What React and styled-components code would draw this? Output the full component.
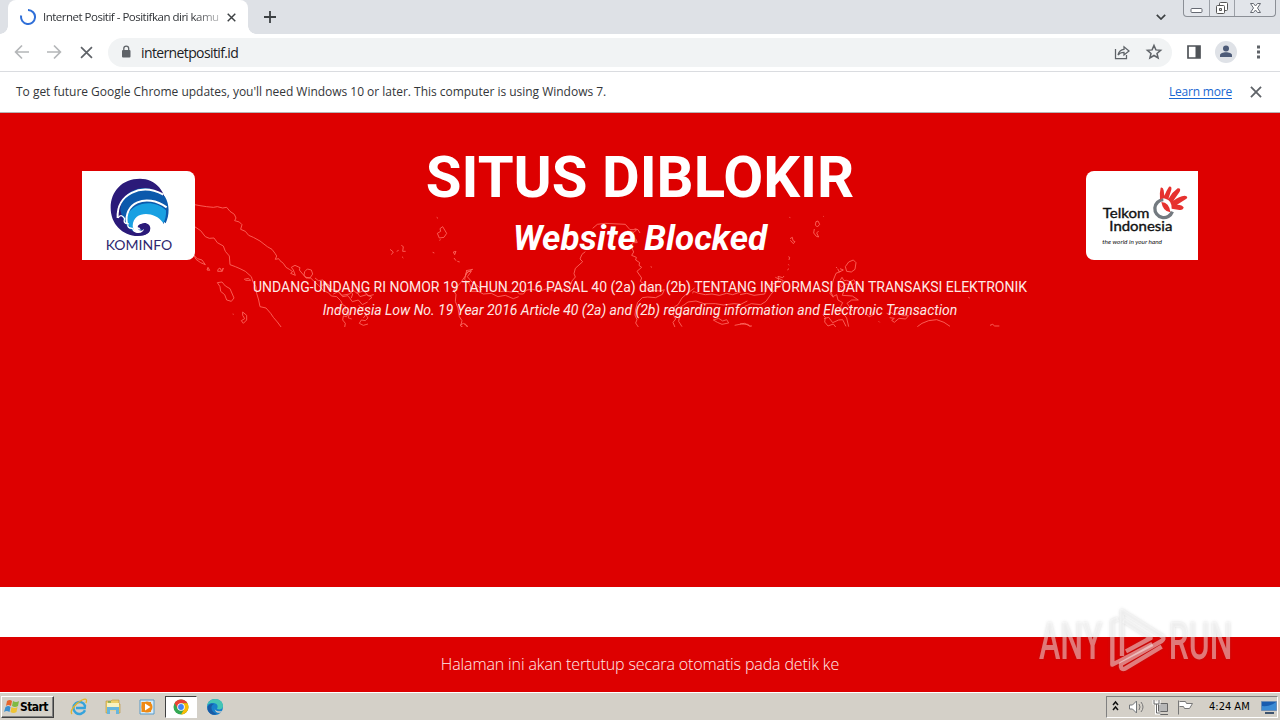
import React from 'react';
import styled, { createGlobalStyle } from 'styled-components';

const Global = createGlobalStyle`
  * { box-sizing: border-box; }
  body { margin: 0; background: #fff; font-family: "Open Sans", "Noto Sans", sans-serif; }
`;
const Page = styled.div`
  width: 1280px; height: 720px; overflow: hidden;
  display: flex; flex-direction: column; background: #fff;
`;
const TabStrip = styled.div`
  height: 34px; flex: none; background: #dee1e6; display: flex; align-items: flex-start;
`;
const Tab = styled.div`
  position: relative; height: 34px; width: 240px; margin-left: 8px; padding: 0 10px 0 12px;
  background: #fff; border-radius: 8px 8px 0 0; display: flex; align-items: center;
  &::before, &::after {
    content: ""; position: absolute; bottom: 0; width: 8px; height: 8px;
  }
  &::before { left: -8px; background: radial-gradient(circle at 0 0, transparent 7.5px, #fff 8px); }
  &::after { right: -8px; background: radial-gradient(circle at 100% 0, transparent 7.5px, #fff 8px); }
`;
const TabTitle = styled.div`
  width: 176px; margin: 0 8px 0 7px; white-space: nowrap;
  font-size: 11.5px; letter-spacing: -0.5px; color: #303337; line-height: 18px;
  mask-image: linear-gradient(to right, #000 150px, rgba(0, 0, 0, 0.3) 176px);
`;
const NewTab = styled.div`
  width: 44px; height: 34px; display: flex; align-items: center; justify-content: center;
`;
const StripRight = styled.div`
  margin-left: auto; display: flex; align-items: flex-start; padding-right: 4px;
`;
const Chevron = styled.div`
  width: 28px; height: 33px; margin-right: 8px; display: flex; align-items: center; justify-content: center;
`;
const WindowButtons = styled.div`
  width: 93px; height: 17px; display: flex; border: 1px solid #8b8f96; border-top: 0;
  border-radius: 0 0 4px 4px; background: #e2e5ea;
`;
const WindowButton = styled.div`
  width: ${p => p.$width}px; height: 16px; display: flex; align-items: center; justify-content: center;
  & + & { border-left: 1px solid #9ca0a7; }
`;
const Toolbar = styled.div`
  height: 38px; flex: none; display: flex; align-items: center; padding: 0 11px 1px 12px;
  background: #fff; border-bottom: 1px solid #dadce0;
`;
const NavButton = styled.div`
  width: 32px; flex: none; height: 28px; display: flex; align-items: center; justify-content: center;
  padding-right: 12px;
`;
const Omnibox = styled.div`
  width: 1064px; flex: none; height: 29px; border-radius: 15px; background: #f1f3f4;
  display: flex; align-items: center; padding: 0 9px 0 12px;
`;
const Url = styled.div`
  flex: 1; margin-left: 9px; font-size: 14px; color: #202124; letter-spacing: -0.62px; line-height: 20px; padding-top: 1px;
`;
const OmniIcons = styled.div`display: flex; align-items: center; gap: 14px;`;
const ToolIcons = styled.div`
  margin-left: 13px; display: flex; align-items: center; gap: 12px;
`;
const InfoBar = styled.div`
  height: 41px; flex: none; display: flex; align-items: center; padding: 0 18px 1px 16px; background: #fff;
  border-bottom: 1px solid #b9b4b4; font-size: 12px; color: #333639;
`;
const InfoText = styled.div`flex: 1; white-space: nowrap; letter-spacing: ${p => p.$spacing || 0}px;`;
const Learn = styled.a`
  color: #1967d2; text-decoration: underline; text-underline-offset: 2px; margin-right: 18px; letter-spacing: -0.2px;
`;
const Hero = styled.main`
  height: 474px; flex: none; background: #dd0000; position: relative; overflow: hidden;
`;
const MapLayer = styled.svg`position: absolute; left: 0; top: 0;`;
const HeroRow = styled.div`
  position: relative; display: flex; justify-content: space-between; align-items: flex-start; padding: 0 82px;
`;
const LogoCard = styled.div`
  width: 112.5px; height: 88.5px; margin-top: 58px; background: #fff; flex: none;
  border-radius: ${p => (p.$left ? '0 8px 8px 0' : '8px 0 0 8px')};
`;
const Headings = styled.div`
  flex: 1; min-width: 0; display: flex; flex-direction: column; align-items: center;
  font-family: Roboto, sans-serif; color: #fff; white-space: nowrap;
`;
const Title = styled.h1`margin: 29px 0 0; font-size: 58px; line-height: 70px; font-weight: 700; letter-spacing: ${p => p.$spacing}px;`;
const Subtitle = styled.h2`margin: 5px 0 0; font-size: 35px; line-height: 44px; font-weight: 700; font-style: italic; letter-spacing: ${p => p.$spacing}px;`;
const Law = styled.p`
  margin: ${p => p.$top}px 0 0; font-size: 14px; line-height: 20px; letter-spacing: ${p => p.$spacing}px;
  font-style: ${p => (p.$italic ? 'italic' : 'normal')}; color: #ffe9e6;
`;
const Gap = styled.div`height: 50px; flex: none; background: #fff;`;
const Countdown = styled.footer`
  height: 55px; flex: none; background: #dd0000; color: #ffecea; text-align: center;
  font-size: 16px; font-weight: 300; line-height: 55px; letter-spacing: ${p => p.$spacing}px;
`;
const Taskbar = styled.div`
  height: 28px; flex: none; background: #d4d0c8; border-top: 1px solid #fff;
  display: flex; align-items: center; padding: 0 2px 0 1px;
`;
const StartButton = styled.div`
  width: 53px; height: 22px; display: flex; align-items: center; padding-left: 2px;
  border: 1px solid; border-color: #fff #404040 #404040 #fff; box-shadow: inset -1px -1px #808080;
  font: bold 12px "DejaVu Sans Condensed", sans-serif; letter-spacing: -0.6px; color: #000;
`;
const TaskItems = styled.div`display: flex; margin-left: 9px; gap: 2px;`;
const TaskItem = styled.div`
  width: 32px; height: 22px; display: flex; align-items: center; justify-content: center;
  border: 1px solid; border-color: ${p => (p.$active ? '#404040 #fff #fff #404040' : 'transparent')};
  background: ${p => (p.$active ? '#fff' : 'transparent')};
`;
const Tray = styled.div`
  margin-left: auto; width: 172px; height: 22px; display: flex; align-items: center;
  border: 1px solid; border-color: #808080 #fff #fff #808080; padding-left: 4px;
`;
const Clock = styled.div`
  margin: 0 9px 0 14px; width: 43px; white-space: nowrap;
  font: 11px "DejaVu Sans Condensed", sans-serif; letter-spacing: 0; color: #000;
`;
const Watermark = styled.svg`position: absolute; left: 1020px; top: 590px; filter: drop-shadow(0 0 1.5px rgba(70, 70, 70, 0.4));`;

const Cross = ({ size = 10, color = '#3c4043', w = 1.6 }) => (
  <svg width={size} height={size} viewBox="0 0 10 10"><path d="M.8.8l8.4 8.4M9.2.8L.8 9.2" stroke={color} strokeWidth={w} fill="none" /></svg>
);
const Arrow = ({ flip }) => (
  <svg width="16" height="16" viewBox="0 0 16 16">
    <path transform={flip ? 'translate(16 0) scale(-1 1)' : undefined} d="M15 8H2M8 1.5L1.6 8 8 14.5" fill="none" stroke="#b4b6b8" strokeWidth="1.7" />
  </svg>
);

const IslandMap = () => (
  <MapLayer width="1280" height="214" viewBox="0 113 1280 214">
    <g fill="none" stroke="#ff6b62" strokeOpacity=".85" strokeWidth="3" strokeLinejoin="round">
      <g transform="translate(180 190) scale(.33333)">
        <path d="M44 44L60 47 80 50 100 52 112 50 128 54 140 52 150 64 163 73 168 84 164 92 178 96 186 104 182 118 196 124 206 136 220 142 240 153 262 170 276 178 285 190 290 198 286 208 296 206 300 212 310 220 318 232 328 238 338 245 332 250 346 256 340 240 334 232 345 226 360 233 358 240 368 252 378 262 392 264 402 274 420 290 430 302 445 308 454 318 470 320 482 332 488 344 498 350 494 364 506 368 500 380 490 378 488 390 496 400 494 412" />
        <path d="M374 245l8-8 12 3 4 12-8 12-12 0-6-8zM405 264l10 8 14-2 8 10 14 8M425 286l18-4 8 16 20 4 14 14 24-4 10-12 12 10 20-8 14 16 16-4M460 312l16-8 12 16 16-3 13 18 18-5 12 14 16-8M506 300l12 12-4 12M530 306l10 14 20-6 16 8-10 8M550 384l8-10 6 10-8 8-12-2-6 10 12 6 14-4M495 374l12 0-2 10 10 3M536 345l8 10 8-4M480 352l-10 6 8 8" />
        <path d="M44 110L62 122 76 140 88 145 102 144 112 158 130 168 136 184 148 198 150 224 166 230 180 236 196 244 214 260 219 276 228 290 230 310 236 330 240 350 258 354 272 370 280 382 292 396 304 412" />
        <path d="M42 196l10 10 14 4 10 14-14-6-14-10zM84 232l-3 8 8 1zM114 238l6-4 4 8 6-8-3 10-14 0zM112 278l14-2 10 12 14 8 12 28-8 10-14-4-6-16-12-10-2-14zM188 366l12 10 0 14-10 10-6-8 10-6-6-10zM192 268l14-3 6 6-16 0M158 372l3 1" />
        <path d="M770 82l4 3M780 116l8-6 12 20-8 12-14 2-6-14 10-6-2-8zM778 151l4-2M630 178l10 8-6 8M650 184l6-3M664 166l6 4-2 14 9 0M666 200l4 4M758 187l5 2M820 186l8-2-4 10zM822 204l6 8M832 214l7 2M860 242l-4 16 8-14 10 0-12 16 14 16 18 12 12 12M856 258l-14 20-12 14-10 8 8 14-2 20 8 20 4 26 8 12-4 16 12 7 8-6-8-9" />
      </g>
      <g transform="translate(460 190) scale(.33333)">
        <path d="M398 115l14-12 24-3 60 3 14 16 20 0-8 8-20-4M524 150l6 8-12 0-4 12 7 16-6 10 14 6-2 8 12 8-2 8 8 6-14 12 14 20-4 10 14 10 10 14 16 4 20 1 12-4-6 14-20 10-24-2-16 2-14 14-6 20-2 18 6 14-4 10 8 12-2 14" />
        <path d="M376 185l-10 8-6 14 8 8-22 20-4 16 4 10-10 12-6 16-18 12-12-4-18 4-24-4-18 6-22-5-18 2-10 12-12 0-8-9-16 3-20-3-12 2M18 242l20-4-20 12-4 18 16 16 4 20 20 0 16 8 24-2 20 10 22-4 24 10 16-6" />
        <path d="M704 294l-22 16-16 14-12 20-10 6-5 22 8 15-8 10 6 15M660 370l-4 24 10 16M656 354l14-8 14-10 24-3 24 8 34 0 24 4 32-4 20 2 20-10M698 310l2-6 16 6 20 4 20-2 22 4 22-6 18 4 24-8M760 390l16-5 12 8 12-4 6 10-20 4-14-6zM824 406l20-4 20 1 8 8M524 116l10 3 6 10M572 230l4 2M527 146l5 12M0 406l10-6 14 10" />
      </g>
      <g transform="translate(740 190) scale(.33333)">
        <path d="M148 82l3 1M250 79l2 1M228 95l6-2 5 10-7 8-6-6zM223 117l-2 12 8 10 7 2-6-12 6-6M150 146l7-4 2 10 6 3-5 6-9-10M145 200l4 2-2 8M145 223l2 3M142 240l5-4M106 262l10 5-2-8 14 4 4-5M0 314l20-4 22 6 32-4 6-18 14-12 14-2 10-14 12 6-8 14-16 12-14 16-14 20-16 10-28-3-20 8M326 216l14-6 8 8-3 20-11 8-14-2-4-14zM300 236l10 4-12 6-5-10M288 232l3 1M302 244l-14 6-8 20-6 26-4 14 8 10 12-6 4 16 14 8-6 12 4 16 14 18 6 26M300 272l6-10 6 10 8-1 10 4 12-6 4 8-8 8-20-3-14 10-8-10 2 16 14 4-5 14 30 2 18 12-20 0-14 10 18 24M248 374l8 8-2 14 10 12 16-6 8 10M252 386l14-4 12 16 18-8 12-1 10 20M272 304l8 18M379 370l8 10 10-4 2-11M416 394l3 3M440 370l10 4 2-8 10 8 16-4 10 7 18 0-9 10-20-2-14 12-8-6 8-6-14-2M532 410l14-10 20-8 24-3 22 8 18 12M750 406l8-3 6 5 14 0M685 322l4 2M0 402l14-2 14 8 8 0" />
      </g>
    </g>
  </MapLayer>
);

const Kominfo = () => (
  <svg width="113" height="89" viewBox="36 33 339 267">
    <defs><clipPath id="disc"><path d="M100 40H300V240H100z" /></clipPath></defs>
    <g clipPath="url(#disc)">
      <path d="M210 56C156 56 122 94 122 143c0 48 34 84 82 85 22 0 37-10 37-23 0-12-14-20-26-14-10 4-9 15-1 17-12 7-22-4-18-16 10-30 60-24 84 1 28-70-8-137-70-137z" fill="#2b1a79" />
      <path d="M151 151C154 91 225 58 285 110c14 24 14 54 2 80-26-25-76-31-86 1-4 12 6 23 18 16-14 20-42 6-52-14-6-12-12-24-16-42z" fill="#0c59ac" />
      <path d="M172 164c20-38 82-48 116-13 1 16-2 28-9 42-16-25-76-31-84 2-3 13 7 25 18 18-17 12-47-13-41-49z" fill="#18a0e2" />
      <path d="M143 174c-4-72 70-106 137-70M171 192c-12-62 56-94 119-50" fill="none" stroke="#fff" strokeWidth="6" />
      <path d="M144 174q9-15 20 2-6 15 10 15-4 15 14 14 3 14 19 10" fill="none" stroke="#fff" strokeWidth="4" />
      <path d="M188 198c2-48 67-44 90-11l10 20c-18 5-30 0-45-11-15-13-35-12-39 2-4 13 13 20 19 7-3 17-26 19-32 4" fill="#fff" />
      <path d="M203 201c2-15 38-12 37 8 0 10-18 21-38 17 20-1 32-15 17-22-6-3-14 0-16-3z" fill="#2b1a79" />
    </g>
    <text x="107" y="270" textLength="200" lengthAdjust="spacingAndGlyphs" fontFamily="Lato, sans-serif" fontSize="42" fill="#30276f">KOMINFO</text>
  </svg>
);
const Telkom = () => (
  <svg width="113" height="89" viewBox="48 33 339 267">
    <path d="M280 119A27 27 0 1 0 307 155" fill="none" stroke="#737a80" strokeWidth="10" />
    <path d="M270 119Q268 98 272 83q7-3 9 8l2 16q6-15 14-27 9-2 7 9l-9 28q11-20 28-32 11-1 6 10l-19 27q18-14 34-15 14 3 3 11l-26 16q17 1 20 8-1 10-17 7l-19-3q1-25-19-30-9-3-16 4z" fill="#e6322f" />
    <path d="M274 126q24 1 27 31-22-2-27-31z" fill="#e6322f" />
    <text x="98" y="175" textLength="140" lengthAdjust="spacingAndGlyphs" fontFamily="Lato, sans-serif" fontSize="38" fill="#111" stroke="#111" strokeWidth="1">Telkom</text>
    <text x="118" y="214" textLength="189" lengthAdjust="spacingAndGlyphs" fontFamily="Lato, sans-serif" fontSize="38" fill="#111" stroke="#111" strokeWidth="1">Indonesia</text>
    <text x="97" y="251" textLength="179" lengthAdjust="spacingAndGlyphs" fontFamily="Lato, sans-serif" fontStyle="italic" fontSize="17" fill="#111">the world in your hand</text>
  </svg>
);

const ExplorerIcon = () => (
  <svg width="18" height="18" viewBox="0 0 18 18"><path d="M15 12.2A6 6 0 1 1 15 7.7L14.7 10H6" fill="none" stroke="#35a3dc" strokeWidth="2.4" /><path d="M2 16C-1 13 6 5 12 2c5-2 5 0 4 3" fill="none" stroke="#e3b52c" strokeWidth="1.3" /></svg>
);
const FolderIcon = () => (
  <svg width="18" height="18" viewBox="0 0 18 18"><path d="M2 5V3h5l1-1h7v4h1v9H2z" fill="#edcf68" stroke="#b89239" strokeWidth=".6" /><path d="M3 5h12v4H3z" fill="#faf2bf" /><path d="M3 9h12v7h-3v-4H6v4H3z" fill="#67b6dd" /><path d="M6 12.500h6V17H6z" fill="#d4d0c8" /><path d="M4 4h3" stroke="#439b50" /></svg>
);
const MediaIcon = () => (
  <svg width="18" height="18" viewBox="0 0 18 18"><path d="M2 2h14v14H2z" fill="#d7ecfa" stroke="#589bc8" /><path d="M3.500 4h9.500v10H3.500z" fill="#ef8a14" /><circle cx="9" cy="9" r="5.500" fill="#ef8a14" /><path d="M7 5.500L12.500 9 7 12.500z" fill="#fff" /></svg>
);
const ChromeIcon = () => (
  <svg width="16" height="16" viewBox="0 0 16 16"><circle cx="8" cy="8" r="7.5" fill="#34a853" /><path d="M1.5 4.3A7.5 7.5 0 0 1 14.5 4.3H8L5 10z" fill="#ea4335" /><path d="M14.5 4.3A7.5 7.5 0 0 1 8 15.5l3.2-5.6-2-5.6z" fill="#fbbc04" /><circle cx="8" cy="8" r="3.8" fill="#fff" /><circle cx="8" cy="8" r="2.9" fill="#4285f4" /></svg>
);
const EdgeIcon = () => (
  <svg width="18" height="18" viewBox="0 0 18 18"><circle cx="9" cy="9" r="8" fill="#1680cb" /><path d="M1 9C1 4 5 1 9 1c5 0 8 3 8 7 0 3-3 4-6 3 2-4-1-6-4-6-4 0-6 2-6 4z" fill="#43c5b5" /><path d="M2 13C0 7 5 5 8 6c-5 2-2 9 3 10-4 2-7 0-9-3z" fill="#195ba5" /><path d="M9 9.500c-1 2.500 1.500 4.500 7 3.500l-1 1.500c-4 1-7-1-6-5z" fill="#d4d0c8" /></svg>
);

export default function App() {
  return (
    <Page>
      <Global />
      <TabStrip>
        <Tab>
          <svg width="16" height="16" viewBox="0 0 16 16"><path d="M8 1a7 7 0 1 1-6.8 5.5" fill="none" stroke="#2f6fd8" strokeWidth="2" /></svg>
          <TabTitle>Internet Positif - Positifkan diri kamu</TabTitle>
          <Cross size={9} />
        </Tab>
        <NewTab><svg width="12" height="12" viewBox="0 0 12 12"><path d="M6 0v12M0 6h12" stroke="#3c4043" strokeWidth="1.8" /></svg></NewTab>
        <StripRight>
          <Chevron><svg width="10" height="6" viewBox="0 0 10 6"><path d="M.8.8L5 5 9.2.8" fill="none" stroke="#3c4043" strokeWidth="1.7" /></svg></Chevron>
          <WindowButtons>
            <WindowButton $width={25}><svg width="13" height="16" viewBox="0 0 13 16"><rect x="1" y="8.5" width="11" height="4" rx="1" fill="#fff" stroke="#666a73" /></svg></WindowButton>
            <WindowButton $width={25}><svg width="14" height="16" viewBox="0 0 14 16"><rect x="4.5" y="2.5" width="8" height="8" rx="1" fill="#fff" stroke="#555" /><rect x="1.5" y="5.500" width="8" height="8" rx="1" fill="#fff" stroke="#555" /><path d="M4.500 8.500h2v2h-2z" fill="#ddd" stroke="#555" /></svg></WindowButton>
            <WindowButton $width={41}><svg width="13" height="16" viewBox="0 0 13 16"><path d="M1.500 3.500H4.500L6.500 6 8.500 3.500H11.500L8.500 8l3 4.500H8.500l-2-2.500-2 2.500h-3L4.500 8z" fill="#fff" stroke="#666a73" /></svg></WindowButton>
          </WindowButtons>
        </StripRight>
      </TabStrip>

      <Toolbar>
        <NavButton><Arrow /></NavButton>
        <NavButton><Arrow flip /></NavButton>
        <NavButton><Cross size={13} color="#5f6368" w={1.3} /></NavButton>
        <Omnibox>
          <svg width="12" height="14" viewBox="0 0 12 14"><rect x="2" y="5" width="8.500" height="7.500" rx="1" fill="#5f6368" /><path d="M3.800 5V3.600a2.450 2.450 0 0 1 4.900 0V5" fill="none" stroke="#5f6368" strokeWidth="1.300" /></svg>
          <Url>internetpositif.id</Url>
          <OmniIcons>
            <svg width="18" height="18" viewBox="0 0 18 18"><path d="M2.500 6v9.500h11V12M5 12c1-4 3-5.500 6-5.700V3.800L16 8l-5 4V9.300C8.500 9.300 6.500 10 5 12z" fill="none" stroke="#5f6368" strokeWidth="1.250" /></svg>
            <svg width="18" height="18" viewBox="0 0 18 18"><path d="M9 2.500l1.900 4.400 4.700.4-3.600 3.100 1.100 4.600L9 12.500 4.900 15 6 10.400 2.400 7.300l4.700-.4z" fill="none" stroke="#5f6368" strokeWidth="1.500" /></svg>
          </OmniIcons>
        </Omnibox>
        <ToolIcons>
          <svg width="18" height="18" viewBox="0 0 18 18"><path d="M3 3h12v12H3z" fill="none" stroke="#4f5358" strokeWidth="1.700" /><path d="M10.500 3H15v12h-4.500z" fill="#4f5358" /></svg>
          <svg width="22" height="22" viewBox="0 0 22 22"><circle cx="11" cy="11" r="11" fill="#dfe2e7" /><circle cx="11" cy="7.500" r="3" fill="#4d5b78" /><path d="M5 16v-1.800c0-4.100 12-4.100 12 0V16z" fill="#4d5b78" /></svg>
          <svg width="20" height="18" viewBox="1 0 20 18"><path d="M9 2.500h3v3H9zM9 7.500h3v3H9zM9 12.500h3v3H9z" fill="#5f6368" /></svg>
        </ToolIcons>
      </Toolbar>

      <InfoBar>
        <InfoText $spacing={-0.02}><span>To get future Google Chrome updates, you'll need Windows 10 or later. This computer is using Windows 7.</span></InfoText>
        <Learn>Learn more</Learn>
        <Cross size={12} color="#5f6368" w={1.5} />
      </InfoBar>

      <Hero>
        <IslandMap />
        <HeroRow>
          <LogoCard $left><Kominfo /></LogoCard>
          <Headings>
            <Title $spacing={0}>SITUS DIBLOKIR</Title>
            <Subtitle $spacing={0}>Website Blocked</Subtitle>
            <Law $top={16} $spacing={-0.02}>UNDANG-UNDANG RI NOMOR 19 TAHUN 2016 PASAL 40 (2a) dan (2b) TENTANG INFORMASI DAN TRANSAKSI ELEKTRONIK</Law>
            <Law $top={3} $spacing={-0.02} $italic>Indonesia Low No. 19 Year 2016 Article 40 (2a) and (2b) regarding information and Electronic Transaction</Law>
          </Headings>
          <LogoCard><Telkom /></LogoCard>
        </HeroRow>
      </Hero>
      <Gap />
      <Countdown $spacing={-0.13}>Halaman ini akan tertutup secara otomatis pada detik ke</Countdown>

      <Taskbar>
        <StartButton>
          <svg width="16" height="16" viewBox="0 0 16 16"><path d="M3 2q3-2 5 0L7 7Q4 5 2 7z" fill="#e5652c" /><path d="M9 2q3 2 6 0l-1 5q-3 2-6 0z" fill="#80ba43" /><path d="M1.500 8q3-2 5 0l-1 5q-3-2-5.500 0z" fill="#398fd0" /><path d="M7.500 8q3 2 6 0l-1 5q-3 2-6 0z" fill="#efc334" /></svg>
          Start
        </StartButton>
        <TaskItems>
          <TaskItem><ExplorerIcon /></TaskItem>
          <TaskItem><FolderIcon /></TaskItem>
          <TaskItem><MediaIcon /></TaskItem>
          <TaskItem $active><ChromeIcon /></TaskItem>
          <TaskItem><EdgeIcon /></TaskItem>
        </TaskItems>
        <Tray>
          <svg width="84" height="20" viewBox="0 0 84 20">
            <path d="M2 8l2.500-3L7 8M2 13l2.500-3L7 13" fill="none" stroke="#111" strokeWidth="1.500" />
            <path d="M18.500 8h3l4-4v12l-4-4h-3z" fill="#fff" stroke="#73777a" /><path d="M28 7q2 3 0 6M30 5q4 5 0 10" fill="none" stroke="#777" />
            <path d="M47.500 6.500h9v8h-9zM49 17.500h8" fill="#b7b7b7" stroke="#666" /><path d="M43 3v3h5V3M45.500 6v10h4" fill="none" stroke="#fff" strokeWidth="3" /><path d="M43 3v4h5V3M45.500 7v9h4" fill="none" stroke="#666" />
            <path d="M67.500 3.500v14M68.500 4.500h6l1 2h6l-3 5h-5l-1-2h-4" fill="#fff" stroke="#777" />
          </svg>
          <Clock>4:24 AM</Clock>
          <svg width="16" height="16" viewBox="0 0 16 16"><path d="M.5 2.500h15v9H.5z" fill="#195caf" stroke="#6c8eb5" /><path d="M1 7q8 1 14-4v8H1z" fill="#3b8bd4" /><path d="M4 14h9" stroke="#3d536e" strokeWidth="2" /></svg>
        </Tray>
      </Taskbar>

      <Watermark width="230" height="100" viewBox="0 0 690 300">
        <g fill="#fff" fillOpacity=".45" fontFamily="Roboto, sans-serif" fontSize="157" fontWeight="500">
          <text transform="translate(57 208) scale(.615 1)">ANY</text>
          <text transform="translate(446 208) scale(.61 1)">RUN</text>
        </g>
        <g fill="none" stroke="#fff" strokeOpacity=".47" strokeWidth="13" strokeLinejoin="round">
          <path d="M294 86L277 94V224L308 208L397 162" />
          <path d="M306 198V63L428 140Q434 146 425 153L303 222Q300 241 315 236L425 170" />
          <path d="M310 91L392 144L318 184" />
        </g>
      </Watermark>
    </Page>
  );
}
